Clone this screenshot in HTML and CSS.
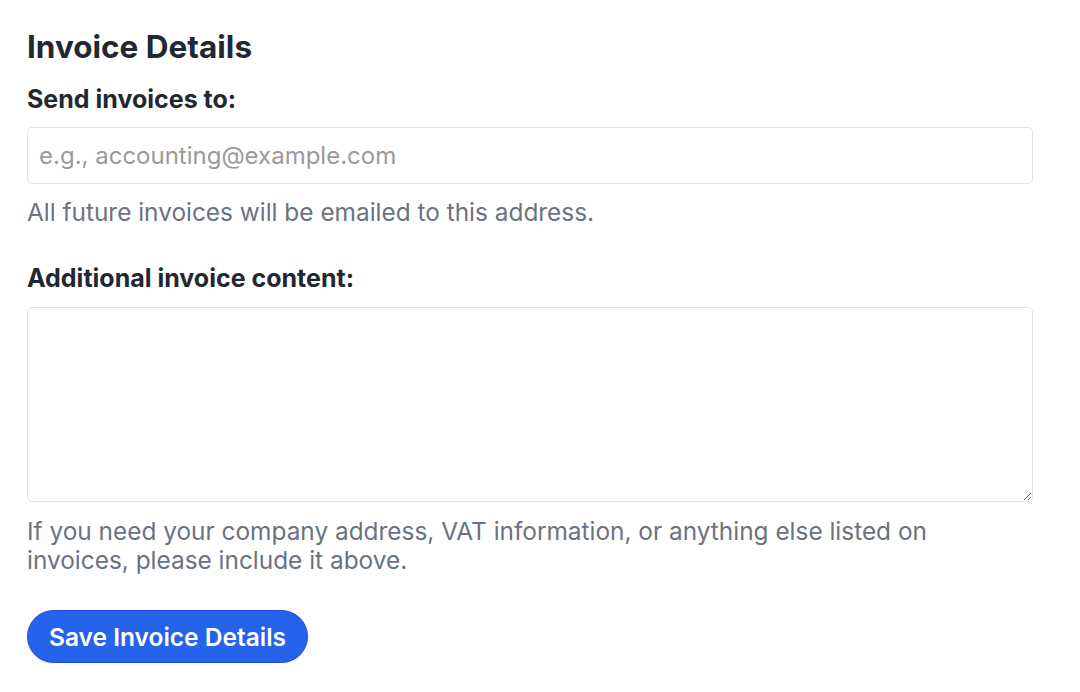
FILE: index.html
```html
<!DOCTYPE html>
<html lang="en">
<head>
<meta charset="utf-8">
<title>Invoice Details</title>
<link rel="stylesheet" href="styles.css">
</head>
<body>
<section class="invoice">
  <h2 class="title">Invoice Details</h2>
  <form class="form">
    <div class="field">
      <label class="label" for="email">Send invoices to:</label>
      <input class="input" id="email" type="email" placeholder="e.g., accounting@example.com">
      <p class="help">All future invoices will be emailed to this address.</p>
    </div>
    <div class="field">
      <label class="label" for="content">Additional invoice content:</label>
      <textarea class="textarea" id="content"></textarea>
      <p class="help">If you need your company address, VAT information, or anything else listed on invoices, please include it above.</p>
    </div>
    <button class="button" type="button">Save Invoice Details</button>
  </form>
</section>
</body>
</html>
```

FILE: styles.css
```css
* { box-sizing: border-box; }
html, body { margin: 0; padding: 0; background: #fff; }
body {
  font-family: Inter, "Noto Sans", sans-serif;
  color: #1f2937;
}
.invoice {
  width: 1006px;
  margin-left: 27px;
  padding-top: 29px;
}
.title {
  margin: 0 0 19px;
  font-size: 31.5px;
  line-height: 36px;
  font-weight: 700;
  color: #222831;
}
.form { display: flex; flex-direction: column; }
.field { display: flex; flex-direction: column; margin-bottom: 35px; }
.label {
  font-size: 25px;
  line-height: 30px;
  font-weight: 700;
  margin-bottom: 13px;
  color: #222831;
}
.field + .field .label { margin-top: 1px; margin-bottom: 14px; }
.input, .textarea {
  width: 100%;
  border: 1px solid #e3e3e3;
  border-radius: 5px;
  font-family: inherit;
  font-size: 24px;
  color: #1f2937;
  outline: none;
  background: #fff;
}
.input {
  height: 57px;
  padding: 0 11px;
}
.input::placeholder { color: #9a9a9a; }
.textarea {
  height: 195px;
  padding: 10px 11px;
  resize: vertical;
  display: block;
}
.help {
  margin: 14px 0 0;
  font-size: 24.4px;
  line-height: 29px;
  color: #6b7280;
}
.field + .field .help { margin-top: 15px; }
.button {
  align-self: flex-start;
  height: 53px;
  padding: 0 21px;
  border: 1px solid #1d4ed8;
  border-radius: 27px;
  background: #2563eb;
  color: #fff;
  font-family: inherit;
  font-size: 24.5px;
  font-weight: 600;
  box-shadow: 0 1px 2px rgba(0, 0, 0, 0.08);
  cursor: pointer;
}
```
